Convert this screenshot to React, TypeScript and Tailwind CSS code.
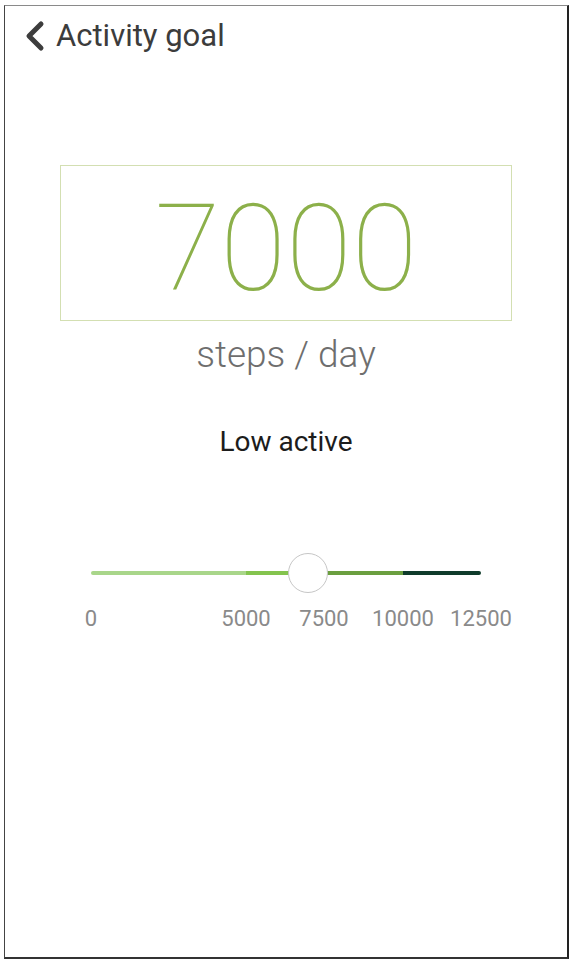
import React from "react";

const ticks = [
  { label: "0", left: 0 },
  { label: "5000", left: 155 },
  { label: "7500", left: 233 },
  { label: "10000", left: 312 },
  { label: "12500", left: 390 },
];

function BackIcon() {
  return (
    <svg width="22" height="32" viewBox="0 0 22 32" fill="none">
      <polyline
        points="17,4 5,16 17,28"
        stroke="#3d3d3d"
        strokeWidth="5"
        strokeLinecap="round"
        strokeLinejoin="round"
      />
    </svg>
  );
}

export default function App() {
  return (
    <div className="h-[962px] w-[570px] bg-white pl-[4px] pt-[5px] font-['Roboto',sans-serif]">
      <div className="flex h-[954px] w-[565px] flex-col border-b-2 border-l border-r-2 border-t border-b-[#333] border-l-[#444] border-r-[#222] border-t-[#8a8a8a]">
        <div className="flex items-center pl-[19px] pt-[13px]">
          <BackIcon />
          <span className="ml-[10px] text-[31px] leading-[34px] text-[#3c3c3c]">
            Activity goal
          </span>
        </div>

        <div className="mx-auto mt-[112px] flex h-[156px] w-[452px] items-center justify-center border border-[#d3dfb2] pt-[12px]">
          <span className="text-[120px] font-thin leading-none text-[#8cb04a]">
            7000
          </span>
        </div>

        <p className="mt-[15px] text-center text-[37px] font-light leading-none text-[#6e6e6e]">
          steps / day
        </p>

        <p className="mt-[55px] text-center text-[28px] leading-none text-[#1c1c1c]">
          Low active
        </p>

        <div className="relative mx-auto mt-[97px] flex h-[40px] w-[390px] items-center">
          <div className="h-[4px] w-[155px] rounded-l-full bg-[#a9d68a]" />
          <div className="h-[4px] w-[78px] bg-[#84c44e]" />
          <div className="h-[4px] w-[79px] bg-[#6b9f3f]" />
          <div className="h-[4px] w-[78px] rounded-r-full bg-[#0f3b2b]" />
          <div className="absolute left-[197px] top-0 h-[40px] w-[40px] rounded-full border-[1.5px] border-[#c6c6c6] bg-white" />
        </div>

        <div className="relative mx-auto mt-[15px] h-[24px] w-[390px] text-[22px] leading-none text-[#8a8a8a]">
          {ticks.map((t) => (
            <span
              key={t.label}
              className="absolute top-0 -translate-x-1/2"
              style={{ left: t.left }}
            >
              {t.label}
            </span>
          ))}
        </div>
      </div>
    </div>
  );
}
